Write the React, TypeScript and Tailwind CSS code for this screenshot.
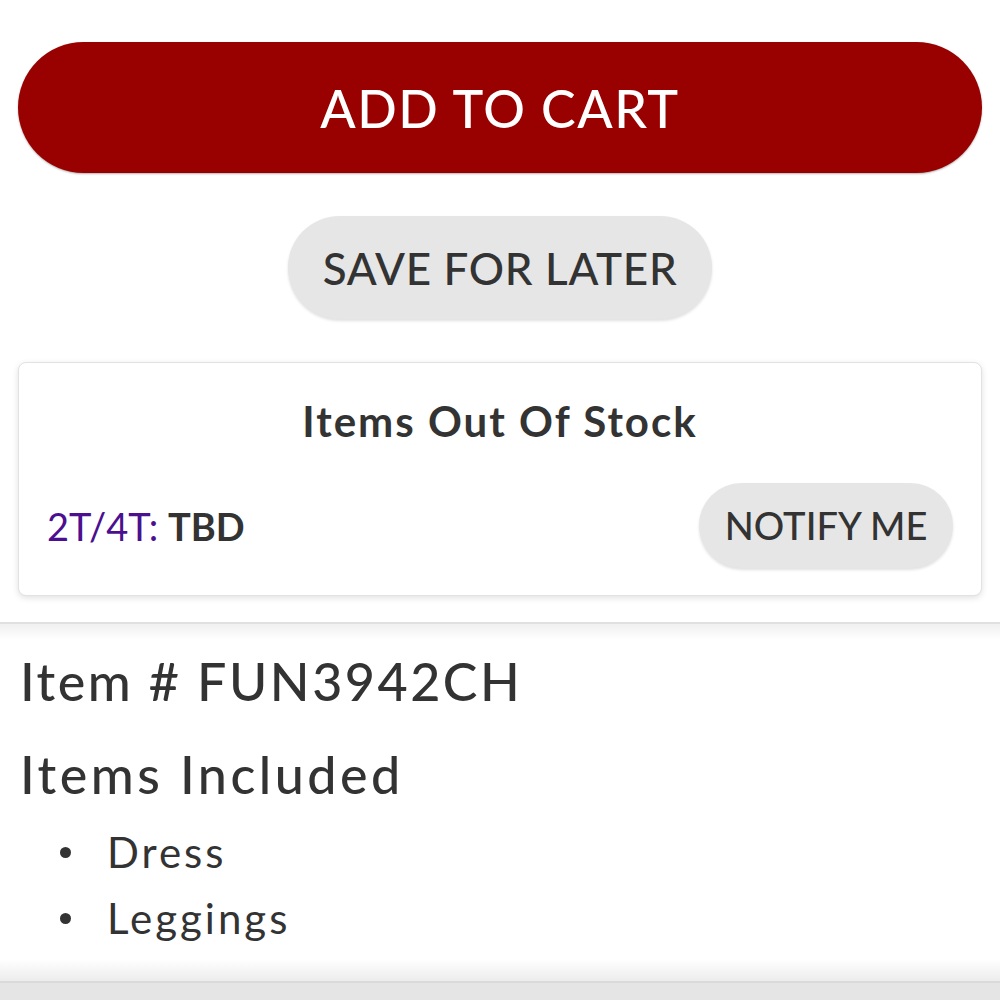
import React from "react";

const font = { fontFamily: "Lato, 'Open Sans', sans-serif" };

const PillButton = ({ className, children }: { className: string; children: React.ReactNode }) => (
  <button className={`rounded-full flex items-center justify-center ${className}`}>{children}</button>
);

const included = ["Dress", "Leggings"];

const App = () => {
  return (
    <div className="w-[1000px] h-[1000px] bg-white overflow-hidden text-[#333]" style={font}>
      <div className="px-[18px] pt-[42px] pb-[26px] flex flex-col items-center">
        <PillButton className="w-full h-[131px] bg-[#990000] text-white text-[52px] font-medium tracking-[1.5px] shadow-[0_1px_2px_rgba(0,0,0,0.3)]">
          ADD TO CART
        </PillButton>
        <PillButton className="mt-[43px] w-[424px] h-[103px] bg-[#e6e6e6] text-[#333] text-[44px] font-medium tracking-[0.7px] shadow-[0_2px_3px_rgba(0,0,0,0.12)]">
          SAVE FOR LATER
        </PillButton>
        <div className="mt-[43px] w-full h-[234px] rounded-[8px] border border-[#e2e2e2] bg-white shadow-[0_2px_6px_rgba(0,0,0,0.12)] px-[28px] pt-[34px]">
          <h3 className="text-center text-[42px] font-bold tracking-[2px] leading-[48px]">Items Out Of Stock</h3>
          <div className="mt-[38px] flex items-center justify-between">
            <div className="text-[38px] leading-none">
              <span className="text-[#4b0f8f]">2T/4T:</span> <span className="font-bold">TBD</span>
            </div>
            <PillButton className="w-[254px] h-[85px] bg-[#e6e6e6] text-[38px] font-medium shadow-[0_2px_3px_rgba(0,0,0,0.12)]">
              NOTIFY ME
            </PillButton>
          </div>
        </div>
      </div>
      <div className="border-t-[2px] border-[#e0e0e0] bg-gradient-to-b from-[#f0f0f0] to-white h-[18px]" />
      <div className="px-[20px] pt-[11px]">
        <h2 className="text-[52px] font-medium tracking-[2.5px] leading-[60px]">Item # FUN3942CH</h2>
        <h2 className="mt-[33px] text-[52px] font-medium tracking-[3.5px] leading-[60px]">Items Included</h2>
        <ul className="mt-[15px] pl-[40px] text-[42px] leading-[66px]">
          {included.map((item) => (
            <li key={item} className="flex items-center">
              <span className="w-[11px] h-[11px] rounded-full bg-[#333]" />
              <span className="ml-[36px] tracking-[3px]">{item}</span>
            </li>
          ))}
        </ul>
      </div>
      <div className="mt-[8px] h-[22px] bg-gradient-to-b from-white to-[#ececec]" />
      <div className="border-t-[2px] border-[#dadada] bg-[#e5e5e5] h-[40px]" />
    </div>
  );
};

export default App;
